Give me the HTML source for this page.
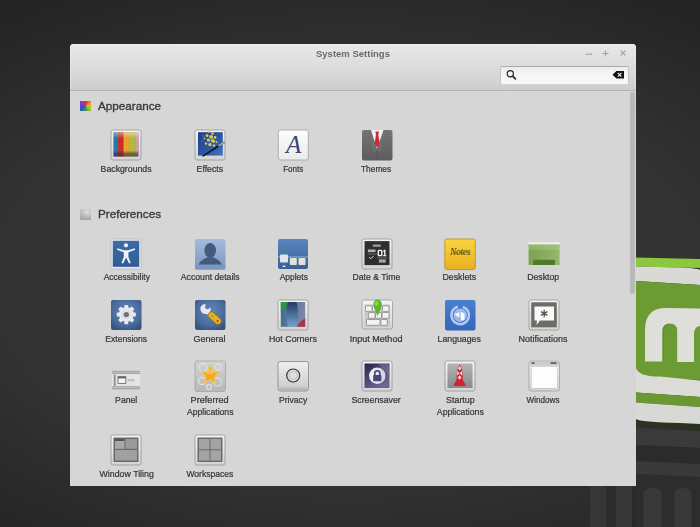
<!DOCTYPE html>
<html><head><meta charset="utf-8">
<style>html,body{margin:0;-webkit-font-smoothing:antialiased;padding:0;width:700px;height:527px;overflow:hidden;background:radial-gradient(ellipse 600px 340px at 350px 280px,#353535 0%,#333333 58%,#252525 94%,#242424 100%);font-family:"Liberation Sans",sans-serif;}
#bg{position:absolute;left:0;top:0;}
#win{position:absolute;left:69.5px;top:44px;width:566px;height:441.5px;background:#d6d6d6;border-radius:4px 4px 0 0;}
#hdr{position:absolute;left:69.5px;top:44px;width:566px;height:46px;background:linear-gradient(#e8e8e8,#dadada 60%,#cdcdcd);border-bottom:1px solid #b4b4b4;border-radius:4px 4px 0 0;box-shadow:inset 0 1px rgba(255,255,255,0.3),inset 1px 0 rgba(255,255,255,0.25),inset -1px 0 rgba(255,255,255,0.25);}
#title{position:absolute;will-change:transform;left:315.5px;top:47.5px;font-weight:bold;font-size:9.5px;color:#6a6a6a;}
#search{position:absolute;left:499.6px;top:65.6px;width:129.8px;height:19px;box-sizing:border-box;background:linear-gradient(#ececec,#f6f6f6 40%,#f8f8f8);border:1px solid #c4c4c4;border-top-color:#aaaaaa;border-bottom-color:#d4d4d4;border-radius:2px;}
.sec{position:absolute;will-change:transform;left:97.8px;font-size:11.7px;color:#3a3a3a;-webkit-text-stroke:0.35px #3a3a3a;}
.ic{position:absolute;}
.lb{position:absolute;will-change:transform;width:120px;text-align:center;font-size:8.6px;line-height:12px;color:#363636;-webkit-text-stroke:0.22px #363636;}
#sb{position:absolute;left:630px;top:92px;width:4.5px;height:202px;background:#b9b9b9;border-radius:2px;}
.secic{position:absolute;width:11px;height:10.8px;left:80px;}
#secic1{top:100.7px;background:conic-gradient(from 0deg at 55% 50%,#e03040,#f0a020,#a0d030,#40a040,#3050c0,#8040c0,#e03040);}
#secic2{top:208.7px;height:11.2px;background:radial-gradient(circle at 65% 30%,rgba(255,255,255,0.45),transparent 60%),linear-gradient(#c4c4c4,#a8a8a8);}

#wrap{position:absolute;left:0;top:0;width:700px;height:527px;filter:blur(0.35px);}
</style></head><body>
<div id="wrap">
<svg id="bg" width="700" height="527" viewBox="0 0 700 527">
<defs>
<linearGradient id="bgG" x1="0" y1="0" x2="0" y2="1"><stop offset="0" stop-color="#2c2c2c"/><stop offset="1" stop-color="#282828"/></linearGradient>
</defs>

<!-- reflection stripes bottom right -->
<rect x="590" y="486" width="16.5" height="41" fill="#363636"/>
<rect x="606.5" y="486" width="9.5" height="41" fill="#2c2c2c"/>
<rect x="616" y="486" width="16" height="41" fill="#373737"/>
<path d="M636 428 L700 431 L700 448 L636 445 Z" fill="#3a3a3a"/>
<path d="M636 445 L700 448 L700 464 L636 461 Z" fill="#2b2b2b"/>
<path d="M636 474 L700 477 L700 527 L636 527 Z" fill="#2d2d2d"/>
<path d="M636 461 L700 464 L700 477 L636 474 Z" fill="#393939"/>
<path d="M643.5 527 L643.5 495 Q643.5 488 652.5 488 Q661.5 488 661.5 495 L661.5 527 Z" fill="#393939"/>
<path d="M674.3 527 L674.3 495 Q674.3 488 683 488 Q691.3 488 691.3 495 L691.3 527 Z" fill="#393939"/>
<!-- mint logo -->
<path d="M636 257.5 L700 259 L700 430 L636 425 Z" fill="#2a3320"/>
<path d="M636 257.5 L700 259 L700 268 L636 266.5 Z" fill="#8cc83e"/>
<path d="M636 266.5 L680 267.5 Q700 268.5 700 270 L700 285 L636 281 Z" fill="#d9d9d6"/>
<path d="M636 281 L700 285 L700 380 L660 378 Q640 377 636 368 Z" fill="#6c9b34"/>
<path d="M636 368 Q640 377 660 376.5 L700 380.5 L700 397 L636 392.5 Z" fill="#dcdcd8"/>
<path d="M636 392.5 L700 397 L700 407 L636 402.5 Z" fill="#6a9930"/>
<path d="M636 402.5 L700 407 L700 424 L680 423 Q640 422 636 419 Z" fill="#d8d8d4"/>
<!-- m letter -->
<path d="M662.3 331 Q662.3 323.5 669.8 323.5 L671 323.5 Q664 325 664 333 L664 361.5 L662.3 361.5 Z" fill="#5a8a2a" opacity="0.6"/>
<path d="M645 361.5 L645 330 C645 315 652 308 666 308 L700 308.6 L700 326 Q695 326 694 333 L694 362 L677.2 362 L677.2 331 Q677.2 323.5 669.8 323.5 Q662.3 323.5 662.3 331 L662.3 361.5 Z" fill="#dededa"/>
</svg>

<svg width="0" height="0" style="position:absolute"><defs>
<linearGradient id="gScrC" x1="0" y1="0" x2="1" y2="0"><stop offset="0" stop-color="#f4f4f8"/><stop offset="1" stop-color="#d4d4e0"/></linearGradient>
<linearGradient id="gTopWhite" x1="0" y1="0" x2="0" y2="1"><stop offset="0" stop-color="#fff" stop-opacity="0.45"/><stop offset="1" stop-color="#fff" stop-opacity="0"/></linearGradient>
<linearGradient id="gBotDark" x1="0" y1="0" x2="0" y2="1"><stop offset="0" stop-color="#3a2848" stop-opacity="0"/><stop offset="0.5" stop-color="#3a2848" stop-opacity="0.55"/><stop offset="1" stop-color="#3a2848" stop-opacity="0.7"/></linearGradient>
<linearGradient id="gFrame" x1="0" y1="0" x2="0" y2="1"><stop offset="0" stop-color="#f4f4f4"/><stop offset="1" stop-color="#d4d4d4"/></linearGradient>
<linearGradient id="gWhite" x1="0" y1="0" x2="0" y2="1"><stop offset="0" stop-color="#fdfdfd"/><stop offset="1" stop-color="#ebebeb"/></linearGradient>
<linearGradient id="gEff" x1="0" y1="0" x2="1" y2="1"><stop offset="0" stop-color="#1f3c80"/><stop offset="0.6" stop-color="#2e5aa8"/><stop offset="1" stop-color="#3d74c4"/></linearGradient>
<linearGradient id="gSuit" x1="0" y1="0" x2="0" y2="1"><stop offset="0" stop-color="#747474"/><stop offset="1" stop-color="#5c5c5c"/></linearGradient>
<linearGradient id="gAcc" x1="0" y1="0" x2="0" y2="1"><stop offset="0" stop-color="#3c6ca6"/><stop offset="1" stop-color="#2f5c92"/></linearGradient>
<linearGradient id="gAcct" x1="0" y1="0" x2="0" y2="1"><stop offset="0" stop-color="#a6bcdc"/><stop offset="1" stop-color="#7896c0"/></linearGradient>
<linearGradient id="gApp" x1="0" y1="0" x2="0" y2="1"><stop offset="0" stop-color="#5a84bc"/><stop offset="0.6" stop-color="#4670a8"/><stop offset="1" stop-color="#3a6098"/></linearGradient>
<linearGradient id="gDesk" x1="0" y1="0" x2="0" y2="1"><stop offset="0" stop-color="#f8d440"/><stop offset="1" stop-color="#eab020"/></linearGradient>
<linearGradient id="gDtop" x1="0" y1="0" x2="1" y2="0"><stop offset="0" stop-color="#7aa24e"/><stop offset="1" stop-color="#94b86c"/></linearGradient>
<radialGradient id="gExtR" cx="0.5" cy="0.4" r="0.65"><stop offset="0" stop-color="#6688b8"/><stop offset="0.7" stop-color="#4a6c9c"/><stop offset="1" stop-color="#34557f"/></radialGradient>
<linearGradient id="gExt" x1="0" y1="0" x2="0" y2="1"><stop offset="0" stop-color="#5580b8"/><stop offset="1" stop-color="#2f5a8e"/></linearGradient>
<linearGradient id="gHot" x1="0" y1="0" x2="1" y2="0.3"><stop offset="0" stop-color="#3e6a84"/><stop offset="0.45" stop-color="#4f78a0"/><stop offset="1" stop-color="#7e86a8"/></linearGradient>
<linearGradient id="gHotLobe" x1="0" y1="0" x2="0" y2="1"><stop offset="0" stop-color="#26385e"/><stop offset="0.5" stop-color="#4a6e9e"/><stop offset="1" stop-color="#78a4cc"/></linearGradient>
<linearGradient id="gLang" x1="0" y1="0" x2="0" y2="1"><stop offset="0" stop-color="#4a7fd0"/><stop offset="1" stop-color="#3466bc"/></linearGradient>
<linearGradient id="gPref" x1="0" y1="0" x2="0" y2="1"><stop offset="0" stop-color="#d2d2d2"/><stop offset="1" stop-color="#b8b8b8"/></linearGradient>
<linearGradient id="gPriv" x1="0" y1="0" x2="0" y2="1"><stop offset="0" stop-color="#f0f0f0"/><stop offset="1" stop-color="#c8c8c8"/></linearGradient>
<linearGradient id="gScr" x1="0" y1="0" x2="0.6" y2="1"><stop offset="0" stop-color="#28254c"/><stop offset="1" stop-color="#6a6896"/></linearGradient>
<linearGradient id="gStart" x1="0" y1="0" x2="0" y2="1"><stop offset="0" stop-color="#b4b4b4"/><stop offset="1" stop-color="#8a8a8a"/></linearGradient>
</defs></svg>
<div id="win"></div>
<div id="hdr"></div>
<div id="title">System Settings</div>
<div class="wb" id="wmin"></div>
<div class="wb" id="wmax"></div>
<div class="wb" id="wcls"></div>
<div id="search"></div>
<svg id="sicons" width="700" height="100" style="position:absolute;left:0;top:0">
 <circle cx="510.3" cy="73.8" r="3.1" fill="none" stroke="#262626" stroke-width="1.2"/>
 <path d="M512.6 76.1 L515.4 78.9" stroke="#262626" stroke-width="1.7" stroke-linecap="round"/>
 <path d="M585.6 54.2 L592 54.2" stroke="#a2a2a2" stroke-width="1.1"/>
 <path d="M602.5 53.5 L608.5 53.5 M605.5 50.5 L605.5 56.5" stroke="#a2a2a2" stroke-width="1.1"/>
 <path d="M620.6 50.6 L625.4 55.4 M625.4 50.6 L620.6 55.4" stroke="#a2a2a2" stroke-width="1.3"/>
 <path d="M612.5 74.8 L616.5 71 L624 71 L624 78.6 L616.5 78.6 Z" fill="#111"/>
 <path d="M617.8 72.8 L621.4 76.6 M621.4 72.8 L617.8 76.6" stroke="#eee" stroke-width="1.2"/>
</svg>
<div id="sb"></div>
<div class="secic" id="secic1"></div>
<div class="sec" style="top:99px;">Appearance</div>
<div class="secic" id="secic2"></div>
<div class="sec" style="top:206.8px;">Preferences</div>
<svg class="ic" style="left:110.30px;top:129.00px" width="32" height="32" viewBox="0 0 32 32"><rect x="1" y="1" width="30" height="30" rx="2" fill="url(#gFrame)" stroke="#9c9c9c" stroke-width="0.9"/>
<rect x="3.6" y="3.2" width="24.8" height="24.2" fill="#777"/>
<rect x="3.6" y="3.2" width="4.1" height="24.2" fill="#2a78a8"/>
<rect x="7.7" y="3.2" width="5.9" height="24.2" fill="#c4302a"/>
<rect x="13.6" y="3.2" width="5.5" height="24.2" fill="#eaa02c"/>
<rect x="19.1" y="3.2" width="6.1" height="24.2" fill="#acbc3e"/>
<rect x="25.2" y="3.2" width="3.2" height="24.2" fill="#d89aac"/>
<rect x="3.6" y="3.2" width="24.8" height="6" fill="url(#gTopWhite)"/>
<rect x="3.6" y="21.5" width="24.8" height="5.9" fill="url(#gBotDark)"/>
</svg><div class="lb" style="left:66.30px;top:162.70px"><span style="display:block;transform:translateX(0.1px) scaleX(1.016)">Backgrounds</span></div><svg class="ic" style="left:193.60px;top:129.00px" width="32" height="32" viewBox="0 0 32 32"><rect x="1" y="1" width="30" height="30" rx="2" fill="url(#gFrame)" stroke="#9c9c9c" stroke-width="0.9"/>
<rect x="4" y="3.2" width="24.8" height="23.4" fill="url(#gEff)"/>
<g fill="#e2d050" opacity="0.95">
<circle cx="15" cy="2.8" r="1.1"/><circle cx="18.5" cy="4.5" r="1.3"/><circle cx="13" cy="6.5" r="1.5"/><circle cx="17" cy="8" r="2"/>
<circle cx="21" cy="8.5" r="1.4"/><circle cx="14.5" cy="11" r="1.8"/><circle cx="19" cy="12" r="2.1"/><circle cx="22.5" cy="13" r="1.1"/>
<circle cx="12" cy="14.5" r="1.2"/><circle cx="16" cy="15.5" r="1.7"/><circle cx="20" cy="16.5" r="1.2"/><circle cx="10.5" cy="9.5" r="0.9"/>
</g>
<g fill="#2a3c90"><circle cx="15.5" cy="9.5" r="0.8"/><circle cx="18" cy="14" r="0.7"/><circle cx="12.5" cy="12" r="0.6"/><circle cx="20.5" cy="10.5" r="0.6"/></g>
<g fill="#8aa0e0"><circle cx="9" cy="7" r="0.7"/><circle cx="8" cy="12" r="0.6"/></g>
<path d="M7.8 27 L29.8 12.6 L30.8 13.9 L9.2 27.8 Z" fill="#121212"/>
<path d="M24 16.3 L29.8 12.6 L30.8 13.9 L25 17.6 Z" fill="#b0b0b0"/>
</svg><div class="lb" style="left:149.60px;top:162.70px"><span style="display:block;transform:translateX(-0.2px) scaleX(1.012)">Effects</span></div><svg class="ic" style="left:277.00px;top:129.00px" width="32" height="32" viewBox="0 0 32 32"><rect x="1.3" y="1" width="30" height="30" rx="2" fill="url(#gWhite)" stroke="#a8a8a8" stroke-width="0.9"/>
<text x="16.6" y="24" font-family="Liberation Serif" font-style="italic" font-size="25" text-anchor="middle" fill="#3a4670">A</text>
</svg><div class="lb" style="left:233.00px;top:162.70px"><span style="display:block;transform:translateX(0.2px) scaleX(0.936)">Fonts</span></div><svg class="ic" style="left:360.50px;top:129.00px" width="32" height="32" viewBox="0 0 32 32"><rect x="1" y="1" width="30.5" height="30.5" rx="2" fill="url(#gSuit)"/>
<path d="M10 1 L16 20 L22.5 1 Z" fill="#f2f2f2"/>
<path d="M14.3 2.5 L18 2.5 L17.3 5.5 L18.8 15 L16.2 18.5 L13.6 15 L15 5.5 Z" fill="#cf2a33"/>
<path d="M8.5 1 L16 21 L12.5 24 L10.5 15 Z" fill="#777" opacity="0.45"/>
<path d="M23.5 1 L16 21 L19.5 24 L21.5 15 Z" fill="#777" opacity="0.45"/>
<path d="M16 21 L16 31" stroke="#505050" stroke-width="0.6"/>
</svg><div class="lb" style="left:316.50px;top:162.70px"><span style="display:block;transform:translateX(-0.9px) scaleX(0.972)">Themes</span></div><svg class="ic" style="left:110.30px;top:237.50px" width="32" height="32" viewBox="0 0 32 32"><rect x="1" y="1" width="30" height="30" rx="1.5" fill="#e2e8ef" stroke="#a8b0bc" stroke-width="0.6"/>
<rect x="2.8" y="2.8" width="26.4" height="26" fill="url(#gAcc)"/>
<circle cx="16" cy="7.3" r="2.1" fill="#f0f4f8"/>
<path d="M7.4 10.2 L13.9 12.3 L18.3 12.3 L24.8 10.2 L25.2 11.7 L18.5 14.2 L18.3 18.5 L20.7 25 L19.1 25.4 L16.1 19.6 L13.1 25.4 L11.5 25 L13.9 18.5 L13.7 14.2 L7 11.7 Z" fill="#f0f4f8"/>
</svg><div class="lb" style="left:66.30px;top:271.20px"><span style="display:block;transform:translateX(0.8px) scaleX(0.990)">Accessibility</span></div><svg class="ic" style="left:193.60px;top:237.50px" width="32" height="32" viewBox="0 0 32 32"><rect x="1" y="1" width="30.5" height="30.5" rx="2" fill="url(#gAcct)"/>
<ellipse cx="16.2" cy="12.4" rx="5.8" ry="7.4" fill="#43597e"/>
<path d="M4.8 27 C5.5 23 10 21 13.5 19.3 L19 19.3 C22.5 21 27 23 27.6 27 Z" fill="#43597e"/>
<rect x="1" y="26.5" width="30.5" height="5" rx="1.5" fill="#7a98c2"/>
</svg><div class="lb" style="left:149.60px;top:271.20px"><span style="display:block;transform:translateX(0.2px) scaleX(1.008)">Account details</span></div><svg class="ic" style="left:277.00px;top:237.50px" width="32" height="32" viewBox="0 0 32 32"><rect x="1" y="1" width="30" height="30" rx="2" fill="url(#gApp)"/>
<rect x="1" y="18.5" width="30" height="1" fill="#c0d0e8" opacity="0.7"/>
<rect x="3" y="16.5" width="8" height="8" rx="1" fill="#dfe6e6"/>
<rect x="12.8" y="20" width="7" height="7" rx="1" fill="#dfe6d8"/>
<rect x="21.5" y="20" width="7" height="7" rx="1" fill="#e6e0d8"/>
<path d="M5 29 L7 27 L9 29 Z" fill="#e0e8f0"/>
</svg><div class="lb" style="left:233.00px;top:271.20px"><span style="display:block;transform:translateX(0.8px) scaleX(0.986)">Applets</span></div><svg class="ic" style="left:360.50px;top:237.50px" width="32" height="32" viewBox="0 0 32 32"><rect x="1" y="1" width="30" height="30" rx="2" fill="url(#gFrame)" stroke="#9c9c9c" stroke-width="0.9"/>
<rect x="3.5" y="3.1" width="25" height="24" fill="#2e2e2e"/>
<rect x="11.8" y="6.5" width="8" height="2.3" fill="#9a9a9a"/>
<rect x="6.9" y="11.5" width="7.6" height="2.6" fill="#b4b4b4"/>
<rect x="6.9" y="15.6" width="9" height="0.8" fill="#777"/>
<path d="M8 19 L9.8 20.8 L12.5 17.9" stroke="#d8d8d8" stroke-width="1" fill="none"/>
<g fill="#f2f2f2">
<path d="M19 11.8 C21.5 11.8 21.5 11.8 21.5 15 C21.5 18.3 21.5 18.3 19 18.3 C16.6 18.3 16.6 18.3 16.6 15 C16.6 11.8 16.6 11.8 19 11.8 Z M19 13 C18 13 18 13.2 18 15 C18 16.8 18 17.1 19 17.1 C20.1 17.1 20.1 16.8 20.1 15 C20.1 13.2 20.1 13 19 13 Z"/>
<path d="M23.2 11.8 L24.5 11.8 L24.5 17.1 L25.3 17.1 L25.3 18.3 L22.2 18.3 L22.2 17.1 L23.1 17.1 L23.1 13.4 L22.3 13.9 L22.3 12.6 Z"/>
</g>
<rect x="16" y="19.6" width="10.5" height="0.6" fill="#888"/>
<rect x="17.9" y="21.4" width="6.8" height="3.2" fill="#a8a8a8"/>
</svg><div class="lb" style="left:316.50px;top:271.20px"><span style="display:block;transform:translateX(-0.6px) scaleX(1.010)">Date &amp; Time</span></div><svg class="ic" style="left:444.00px;top:237.50px" width="32" height="32" viewBox="0 0 32 32"><rect x="0.8" y="1" width="30.5" height="30.5" rx="2" fill="url(#gDesk)" stroke="#b88f18" stroke-width="0.8"/>
<text x="16" y="16.5" font-family="Liberation Serif" font-style="italic" font-size="9.5" text-anchor="middle" fill="#4a3a10" letter-spacing="-0.3">Notes</text>
<path d="M7 15 C10 17 14 14 20 15 L26 14" stroke="#6a5418" stroke-width="0.5" fill="none"/>
</svg><div class="lb" style="left:400.00px;top:271.20px"><span style="display:block;transform:translateX(-0.7px) scaleX(1.024)">Desklets</span></div><svg class="ic" style="left:527.50px;top:237.50px" width="32" height="32" viewBox="0 0 32 32"><rect x="0.6" y="4.2" width="31" height="2.4" fill="#eef0ea"/>
<rect x="0.6" y="6.6" width="31" height="20.4" fill="url(#gDtop)"/>
<rect x="0.6" y="6.6" width="31" height="5" fill="#b8d8a0" opacity="0.35"/>
<rect x="5.2" y="21.8" width="21.8" height="5.2" fill="#4f7a2c"/>
</svg><div class="lb" style="left:483.50px;top:271.20px"><span style="display:block;transform:translateX(-0.8px) scaleX(1.016)">Desktop</span></div><svg class="ic" style="left:110.30px;top:299.00px" width="32" height="32" viewBox="0 0 32 32"><rect x="1" y="1" width="30.5" height="30" rx="2" fill="url(#gExtR)"/>
<g transform="translate(16.3,15.6)" fill="#e8e9ec">
<circle r="7.4"/>
<rect x="-2" y="-9.6" width="4" height="19.2" rx="1"/>
<rect x="-2" y="-9.6" width="4" height="19.2" rx="1" transform="rotate(45)"/>
<rect x="-2" y="-9.6" width="4" height="19.2" rx="1" transform="rotate(90)"/>
<rect x="-2" y="-9.6" width="4" height="19.2" rx="1" transform="rotate(135)"/>
</g>
<circle cx="16.3" cy="15.6" r="2.7" fill="#6b7280"/>
<circle cx="16.3" cy="15.6" r="4.2" fill="none" stroke="#d0d0d4" stroke-width="0.8"/>
</svg><div class="lb" style="left:66.30px;top:332.70px"><span style="display:block;transform:translateX(0.2px) scaleX(0.995)">Extensions</span></div><svg class="ic" style="left:193.60px;top:299.00px" width="32" height="32" viewBox="0 0 32 32"><rect x="1" y="1" width="30.5" height="30" rx="2" fill="url(#gExtR)"/>
<path d="M14.5 12.5 L19 17 L17 19 L12.5 14.5 Z" fill="#d8dce2"/>
<path d="M11.5 5 C8 5 5.8 8 6.5 11 C7.2 14 10.5 15.8 13.5 14.8 C16 13.8 17.2 11 16.5 8.5 L13.5 10.5 L11 9 L11.5 6 Z" fill="#e6e9ee"/>
<g transform="rotate(42 20.5 19)"><rect x="13" y="15.6" width="15.5" height="6.8" rx="3.4" fill="#e2b226" stroke="#80600e" stroke-width="0.6"/>
<circle cx="24.8" cy="19" r="1" fill="#6a4a08"/><circle cx="17.5" cy="19" r="0.7" fill="#9a7618"/></g>
</svg><div class="lb" style="left:149.60px;top:332.70px"><span style="display:block;transform:translateX(-0.5px) scaleX(1.053)">General</span></div><svg class="ic" style="left:277.00px;top:299.00px" width="32" height="32" viewBox="0 0 32 32"><rect x="1" y="1" width="30" height="30" rx="2" fill="url(#gFrame)" stroke="#9c9c9c" stroke-width="0.9"/>
<rect x="3.8" y="3" width="24.4" height="24.8" fill="url(#gHot)"/>
<path d="M10.8 3 L19.5 3 C21.5 9 21 20 19 27.8 L11 27.8 C9.5 20 9 9 10.8 3 Z" fill="url(#gHotLobe)"/>
<path d="M3.8 3 L10.8 3 C10 7 8 10.5 3.8 12.5 Z" fill="#2a9646"/>
<path d="M28.2 19.5 L28.2 27.8 L20 27.8 C22 23.5 25 21 28.2 19.5 Z" fill="#a83448"/>
</svg><div class="lb" style="left:233.00px;top:332.70px"><span style="display:block;transform:translateX(-0.1px) scaleX(1.033)">Hot Corners</span></div><svg class="ic" style="left:360.50px;top:299.00px" width="32" height="32" viewBox="0 0 32 32"><rect x="1" y="1" width="30.5" height="29" rx="2" fill="url(#gFrame)" stroke="#9c9c9c" stroke-width="0.8"/>
<rect x="3.5" y="5.5" width="25.5" height="22.5" fill="#c8c8c8"/>
<g fill="#f2f2f2" stroke="#808080" stroke-width="0.7">
<rect x="4.5" y="6.8" width="6.5" height="5.6" rx="0.6"/>
<rect x="11.5" y="6.8" width="5.5" height="5.6" rx="0.6"/>
<rect x="21.5" y="6.8" width="6.5" height="5.6" rx="0.6"/>
<rect x="7.5" y="13.5" width="6.5" height="5.8" rx="0.6"/>
<rect x="14.5" y="13.5" width="6" height="5.8" rx="0.6"/>
<rect x="21" y="13.5" width="7" height="5.8" rx="0.6"/>
<rect x="5.5" y="20.5" width="13.5" height="5.8" rx="0.6"/>
<rect x="19.8" y="20.5" width="6.5" height="5.8" rx="0.6"/>
</g>
<path d="M16.6 0.5 C19.2 0.5 20.8 2.5 20.8 5.5 C20.8 9 18.3 13 16.6 17 C14.9 13 12.4 9 12.4 5.5 C12.4 2.5 14 0.5 16.6 0.5 Z" fill="#5cb82a"/>
<ellipse cx="15.6" cy="4.5" rx="1.7" ry="2.4" fill="#9ade60" opacity="0.7"/>
</svg><div class="lb" style="left:316.50px;top:332.70px"><span style="display:block;transform:translateX(-0.9px) scaleX(1.050)">Input Method</span></div><svg class="ic" style="left:444.00px;top:299.00px" width="32" height="32" viewBox="0 0 32 32"><rect x="1" y="1" width="30.5" height="30.5" rx="2" fill="url(#gLang)"/>
<circle cx="16.2" cy="16.3" r="8.8" fill="none" stroke="#b4caf0" stroke-width="2.6" stroke-dasharray="50 5.3" transform="rotate(-73 16.2 16.3)"/>
<circle cx="16.2" cy="16.3" r="6.2" fill="#98b6ea"/>
<circle cx="16.2" cy="16.3" r="6.2" fill="none" stroke="#d8e4fa" stroke-width="0.6"/>
<path d="M10.5 15.2 L15.5 13.2 L15 18.8 Z M16.8 12.8 L20.6 14.6 L20.4 20.8 L17.4 21.6 L16.4 18 Z" fill="#f8faff"/>
</svg><div class="lb" style="left:400.00px;top:332.70px"><span style="display:block;transform:translateX(-0.8px) scaleX(1.017)">Languages</span></div><svg class="ic" style="left:527.50px;top:299.00px" width="32" height="32" viewBox="0 0 32 32"><rect x="1" y="1" width="30" height="30" rx="2" fill="url(#gFrame)" stroke="#9c9c9c" stroke-width="0.9"/>
<rect x="3.2" y="3.3" width="25.6" height="25" fill="#6e6c66"/>
<path d="M6.5 7.5 L26 7.5 L26 21.5 L12 21.5 L8.5 26 L9 21.5 L6.5 21.5 Z" fill="#fafafa"/>
<g stroke="#505050" stroke-width="1.3"><line x1="16.2" y1="10.8" x2="16.2" y2="18.2"/><line x1="13" y1="12.6" x2="19.4" y2="16.4"/><line x1="19.4" y1="12.6" x2="13" y2="16.4"/></g>
</svg><div class="lb" style="left:483.50px;top:332.70px"><span style="display:block;transform:translateX(-1.0px) scaleX(1.043)">Notifications</span></div><svg class="ic" style="left:110.30px;top:360.00px" width="32" height="32" viewBox="0 0 32 32"><rect x="2" y="10.8" width="28" height="18.6" fill="#e4e4e4"/>
<rect x="2" y="10.8" width="28" height="3.2" fill="#a6a6a6"/>
<rect x="2" y="12.3" width="28" height="0.6" fill="#cfcfcf"/>
<rect x="2" y="26.2" width="28" height="3.2" fill="#a6a6a6"/>
<rect x="2" y="27.4" width="28" height="0.6" fill="#cfcfcf"/>
<rect x="3.8" y="14.5" width="1.8" height="11.5" fill="#8c8c8c"/>
<rect x="7.6" y="16.2" width="8.6" height="7.6" fill="#5e665e"/>
<rect x="8.4" y="18.4" width="7" height="4.6" fill="#f4f4f4"/>
<rect x="17.5" y="19" width="7" height="2.4" fill="#c2c2c2"/>
</svg><div class="lb" style="left:66.30px;top:393.70px"><span style="display:block;transform:translateX(0.2px) scaleX(1.009)">Panel</span></div><svg class="ic" style="left:193.60px;top:360.00px" width="32" height="32" viewBox="0 0 32 32"><rect x="1" y="1" width="30.5" height="30.5" rx="2" fill="url(#gPref)" stroke="#a4a4a4" stroke-width="0.8"/>
<g fill="none" stroke="#e4e4e4" stroke-width="1.3" opacity="0.8">
<circle cx="9" cy="7.5" r="3.8"/><circle cx="24" cy="7" r="3"/><circle cx="8" cy="21" r="3.5"/><circle cx="23.5" cy="22" r="4"/><circle cx="15" cy="27" r="2.5"/>
</g>
<path d="M16.2 6 L18.8 11.5 L24.8 12.3 L20.4 16.5 L21.5 22.5 L16.2 19.6 L10.9 22.5 L12 16.5 L7.6 12.3 L13.6 11.5 Z" fill="#f5a623" stroke="#f6c050" stroke-width="1.6" stroke-linejoin="round"/>
<ellipse cx="16.2" cy="12" rx="4" ry="2.5" fill="#fbd060" opacity="0.6"/>
</svg><div class="lb" style="left:149.60px;top:393.70px"><span style="display:block;transform:translateX(-0.4px) scaleX(1.061)">Preferred</span><span style="display:block;transform:translateX(0.2px) scaleX(1.006)">Applications</span></div><svg class="ic" style="left:277.00px;top:360.00px" width="32" height="32" viewBox="0 0 32 32"><rect x="1" y="1.5" width="30.5" height="29.5" rx="2.5" fill="url(#gPriv)" stroke="#8e8e8e" stroke-width="0.9"/>
<rect x="2.5" y="27.5" width="27.5" height="2.5" fill="#a8a8a8" opacity="0.5"/>
<circle cx="16.2" cy="15.5" r="6.5" fill="#e0e0e0" stroke="#333" stroke-width="1.2"/>
<circle cx="16.2" cy="15.5" r="4" fill="none" stroke="#b8b8b8" stroke-width="0.9"/>
</svg><div class="lb" style="left:233.00px;top:393.70px"><span style="display:block;transform:translateX(0.1px) scaleX(1.004)">Privacy</span></div><svg class="ic" style="left:360.50px;top:360.00px" width="32" height="32" viewBox="0 0 32 32"><rect x="1" y="1" width="30" height="30" rx="2" fill="url(#gFrame)" stroke="#9c9c9c" stroke-width="0.9"/>
<rect x="3.5" y="3.5" width="25" height="24.5" fill="url(#gScr)"/>
<path d="M17 3.5 L28.5 3.5 L28.5 16 C24 12 20 8 17 3.5 Z" fill="#8a88a8" opacity="0.45"/>
<circle cx="16.3" cy="15.8" r="8.2" fill="url(#gScrC)"/>
<path d="M13.8 15.5 L13.8 13 C13.8 10.2 18.8 10.2 18.8 13 L18.8 15.5" fill="none" stroke="#4a4880" stroke-width="1.7"/>
<rect x="12.2" y="15" width="8.2" height="6.2" rx="0.8" fill="#4a4880"/>
</svg><div class="lb" style="left:316.50px;top:393.70px"><span style="display:block;transform:translateX(-0.9px) scaleX(1.023)">Screensaver</span></div><svg class="ic" style="left:444.00px;top:360.00px" width="32" height="32" viewBox="0 0 32 32"><rect x="1" y="1" width="30" height="30" rx="2" fill="url(#gFrame)" stroke="#9c9c9c" stroke-width="0.9"/>
<rect x="3.5" y="3.5" width="25" height="24.5" fill="url(#gStart)"/>
<path d="M15.6 4.5 C17.5 7 18.6 11 18.6 16 L18.8 20 L21.5 24.5 L21.5 26 L9.8 26 L9.8 24.5 L12.5 20 L12.7 16 C12.7 11 13.8 7 15.6 4.5 Z" fill="#d2222e"/>
<g fill="#f2d6d6">
<path d="M15.6 6 L17.2 8.3 L15.6 10.6 L14 8.3 Z"/>
<path d="M13.2 10.8 L15.6 13.2 L13.2 15.6 Z"/>
<path d="M18 10.8 L18 15.6 L15.6 13.2 Z"/>
<path d="M15.6 15.2 L17.6 17.5 L15.6 19.8 L13.6 17.5 Z"/>
</g>
</svg><div class="lb" style="left:400.00px;top:393.70px"><span style="display:block;transform:translateX(0.4px) scaleX(1.036)">Startup</span><span style="display:block;transform:translateX(0.3px) scaleX(1.013)">Applications</span></div><svg class="ic" style="left:527.50px;top:360.00px" width="32" height="32" viewBox="0 0 32 32"><rect x="1" y="1.2" width="30.5" height="29.8" rx="2" fill="url(#gFrame)" stroke="#a0a0a0" stroke-width="0.8"/>
<rect x="1.6" y="1.8" width="29.3" height="4" fill="#cdcdcd"/>
<rect x="3.5" y="2.3" width="3" height="1.6" fill="#555"/>
<rect x="22.5" y="2.3" width="6" height="1.6" fill="#555"/>
<rect x="3.2" y="6.6" width="26" height="21.6" fill="#fdfdfd" stroke="#b8b8b8" stroke-width="0.5"/>
</svg><div class="lb" style="left:483.50px;top:393.70px"><span style="display:block;transform:translateX(-1.0px) scaleX(0.950)">Windows</span></div><svg class="ic" style="left:110.30px;top:434.00px" width="32" height="32" viewBox="0 0 32 32"><rect x="1" y="1" width="30" height="30" rx="2" fill="url(#gFrame)" stroke="#9c9c9c" stroke-width="0.9"/>
<rect x="3.5" y="3.5" width="25" height="24.5" fill="#6a6a6a"/>
<rect x="5" y="5" width="9.5" height="9.8" fill="#a8a8a8"/>
<rect x="5" y="5" width="9.5" height="2" fill="#555"/>
<rect x="15.5" y="5" width="11.5" height="9.8" fill="#9a9a9a"/>
<rect x="5" y="16" width="22" height="10.5" fill="#a0a0a0"/>
</svg><div class="lb" style="left:66.30px;top:467.70px"><span style="display:block;transform:translateX(0.7px) scaleX(1.023)">Window Tiling</span></div><svg class="ic" style="left:193.60px;top:434.00px" width="32" height="32" viewBox="0 0 32 32"><rect x="1" y="1" width="30" height="30" rx="2" fill="url(#gFrame)" stroke="#9c9c9c" stroke-width="0.9"/>
<rect x="3.5" y="3.5" width="25" height="24.5" fill="#6a6a6a"/>
<rect x="5" y="5" width="10.5" height="10.3" fill="#a4a4a4"/>
<rect x="16.5" y="5" width="10.5" height="10.3" fill="#a4a4a4"/>
<rect x="5" y="16.3" width="10.5" height="10.3" fill="#a4a4a4"/>
<rect x="16.5" y="16.3" width="10.5" height="10.3" fill="#a4a4a4"/>
</svg><div class="lb" style="left:149.60px;top:467.70px"><span style="display:block;transform:translateX(-0.2px) scaleX(0.994)">Workspaces</span></div>
</div>
</body></html>
